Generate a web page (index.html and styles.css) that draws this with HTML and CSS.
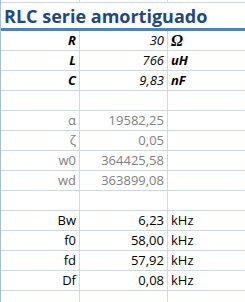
FILE: index.html
```html
<!DOCTYPE html>
<html>
<head>
<meta charset="utf-8">
<link rel="stylesheet" href="styles.css">
</head>
<body>
<div class="sheet">
  <div class="row top"><div class="c a"></div><div class="c b"></div><div class="c u"></div></div>
  <div class="title">RLC serie amortiguado</div>
  <div class="row in"><div class="c a">R</div><div class="c b">30</div><div class="c u omega">Ω</div></div>
  <div class="row in"><div class="c a">L</div><div class="c b">766</div><div class="c u">uH</div></div>
  <div class="row in"><div class="c a">C</div><div class="c b">9,83</div><div class="c u">nF</div></div>
  <div class="row"><div class="c a"></div><div class="c b"></div><div class="c u"></div></div>
  <div class="row gray"><div class="c a">α</div><div class="c b">19582,25</div><div class="c u"></div></div>
  <div class="row gray"><div class="c a">ζ</div><div class="c b">0,05</div><div class="c u"></div></div>
  <div class="row gray"><div class="c a">w0</div><div class="c b">364425,58</div><div class="c u"></div></div>
  <div class="row gray"><div class="c a">wd</div><div class="c b">363899,08</div><div class="c u"></div></div>
  <div class="row"><div class="c a"></div><div class="c b"></div><div class="c u"></div></div>
  <div class="row"><div class="c a">Bw</div><div class="c b">6,23</div><div class="c u">kHz</div></div>
  <div class="row"><div class="c a">f0</div><div class="c b">58,00</div><div class="c u">kHz</div></div>
  <div class="row"><div class="c a">fd</div><div class="c b">57,92</div><div class="c u">kHz</div></div>
  <div class="row"><div class="c a">Df</div><div class="c b">0,08</div><div class="c u">kHz</div></div>
  <div class="row"><div class="c a"></div><div class="c b"></div><div class="c u"></div></div>
</div>
</body>
</html>
```
FILE: styles.css
```css
html, body {
  margin: 0;
  padding: 0;
  background: #ffffff;
}
.sheet {
  width: 245px;
  height: 302px;
  overflow: hidden;
  border-left: 1px solid #a9bfd9;
  box-sizing: border-box;
  font-family: "Open Sans", sans-serif;
  font-size: 13px;
  color: #000;
}
.row {
  display: grid;
  grid-template-columns: 79px 88px 1fr;
  height: 20px;
}
.row.top {
  height: 3px;
}
.c {
  border-bottom: 1px solid #d0d7e5;
  line-height: 19px;
  white-space: nowrap;
  overflow: hidden;
}
.a, .b {
  border-right: 1px solid #d0d7e5;
  text-align: right;
  padding-right: 3px;
}
.u {
  padding-left: 3px;
}
.title {
  height: 25px;
  border-bottom: 3px solid #4f81bd;
  color: #1f497d;
  font-weight: bold;
  font-size: 18px;
  line-height: 26px;
  padding-left: 3px;
  white-space: nowrap;
}
.in .a, .in .u {
  font-weight: bold;
  font-style: italic;
}
.in .b {
  font-style: italic;
}
.omega {
  font-family: "Liberation Serif", serif;
  font-size: 16px;
}
.gray {
  color: #808080;
}
```
